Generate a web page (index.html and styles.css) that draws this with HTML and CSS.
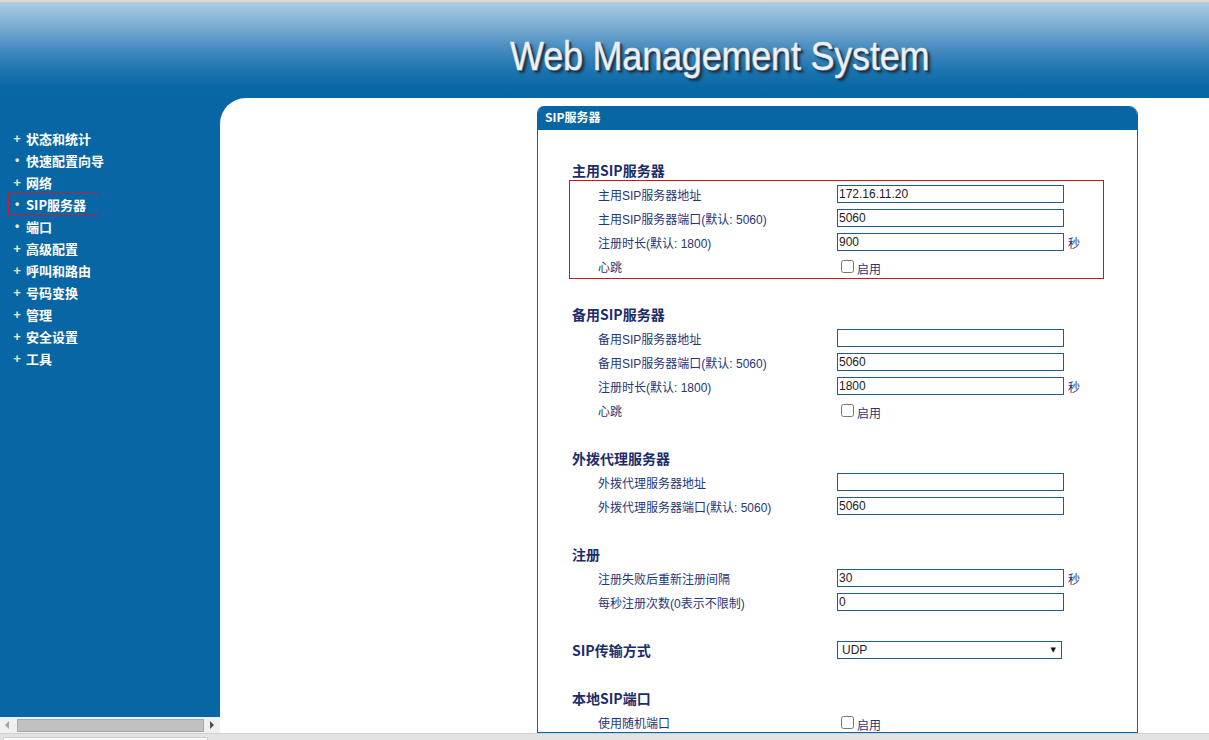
FILE: index.html
```html
<!DOCTYPE html>
<html lang="zh-CN">
<head>
<meta charset="utf-8">
<title>Web Management System</title>
<link rel="stylesheet" href="styles.css">
</head>
<body>
<div class="page">
  <div class="topline"></div>
  <header class="header">
    <h1 class="title">Web Management System</h1>
  </header>
  <div class="main">
    <aside class="side">
      <nav class="nav">
        <a class="nav-item"><span class="bullet">+</span>状态和统计</a>
        <a class="nav-item"><span class="bullet dot">•</span>快速配置向导</a>
        <a class="nav-item"><span class="bullet">+</span>网络</a>
        <a class="nav-item active"><span class="bullet dot">•</span>SIP服务器</a>
        <a class="nav-item"><span class="bullet dot">•</span>端口</a>
        <a class="nav-item"><span class="bullet">+</span>高级配置</a>
        <a class="nav-item"><span class="bullet">+</span>呼叫和路由</a>
        <a class="nav-item"><span class="bullet">+</span>号码变换</a>
        <a class="nav-item"><span class="bullet">+</span>管理</a>
        <a class="nav-item"><span class="bullet">+</span>安全设置</a>
        <a class="nav-item"><span class="bullet">+</span>工具</a>
      </nav>
      <div class="hscroll">
        <span class="arrow-left"></span>
        <span class="thumb"></span>
        <span class="arrow-right"></span>
      </div>
    </aside>
    <section class="content">
      <div class="panel">
        <div class="panel-head">SIP服务器</div>
        <div class="panel-body">
          <div class="heading">主用SIP服务器</div>
          <div class="group highlight">
            <div class="row"><span class="label">主用SIP服务器地址</span><input class="field" type="text" value="172.16.11.20"></div>
            <div class="row"><span class="label">主用SIP服务器端口(默认: 5060)</span><input class="field" type="text" value="5060"></div>
            <div class="row"><span class="label">注册时长(默认: 1800)</span><input class="field" type="text" value="900"><span class="unit">秒</span></div>
            <div class="row"><span class="label">心跳</span><label class="check"><input type="checkbox"><span>启用</span></label></div>
          </div>
          <div class="spacer"></div>

          <div class="heading">备用SIP服务器</div>
          <div class="group">
            <div class="row"><span class="label">备用SIP服务器地址</span><input class="field" type="text" value=""></div>
            <div class="row"><span class="label">备用SIP服务器端口(默认: 5060)</span><input class="field" type="text" value="5060"></div>
            <div class="row"><span class="label">注册时长(默认: 1800)</span><input class="field" type="text" value="1800"><span class="unit">秒</span></div>
            <div class="row"><span class="label">心跳</span><label class="check"><input type="checkbox"><span>启用</span></label></div>
          </div>
          <div class="spacer"></div>

          <div class="heading">外拨代理服务器</div>
          <div class="group">
            <div class="row"><span class="label">外拨代理服务器地址</span><input class="field" type="text" value=""></div>
            <div class="row"><span class="label">外拨代理服务器端口(默认: 5060)</span><input class="field" type="text" value="5060"></div>
          </div>
          <div class="spacer"></div>

          <div class="heading">注册</div>
          <div class="group">
            <div class="row"><span class="label">注册失败后重新注册间隔</span><input class="field" type="text" value="30"><span class="unit">秒</span></div>
            <div class="row"><span class="label">每秒注册次数(0表示不限制)</span><input class="field" type="text" value="0"></div>
          </div>
          <div class="spacer"></div>

          <div class="heading heading-row"><span class="heading-label">SIP传输方式</span><span class="select"><select><option>UDP</option><option>TCP</option><option>TLS</option></select></span></div>
          <div class="spacer"></div>

          <div class="heading">本地SIP端口</div>
          <div class="group">
            <div class="row"><span class="label">使用随机端口</span><label class="check"><input type="checkbox"><span>启用</span></label></div>
          </div>
        </div>
      </div>
    </section>
  </div>
  <div class="statusbar"><span class="status-box"></span></div>
</div>
</body>
</html>
```

FILE: styles.css
```css
* { box-sizing: border-box; }

html, body {
  margin: 0;
  padding: 0;
  overflow: hidden;
}

body {
  font-family: "Liberation Sans", "Noto Sans CJK SC", sans-serif;
  font-size: 12px;
  background: #ffffff;
}

.page {
  width: 1209px;
  height: 740px;
  display: flex;
  flex-direction: column;
}

.topline {
  height: 3px;
  background: #d9d9d9;
  border-bottom: 1px solid #c9c9c9;
}

.header {
  height: 95px;
  background: linear-gradient(to bottom, #a9cce3 0%, #7fb0d4 22%, #4d90c2 45%, #2277b0 68%, #0968a6 88%, #0866a4 100%);
  display: flex;
  align-items: flex-start;
  padding-left: 510px;
  padding-top: 31px;
}

.title {
  margin: 0;
  font-family: "Liberation Sans", Arial, sans-serif;
  font-weight: normal;
  font-size: 36px;
  line-height: 40px;
  color: #eef1f5;
  transform: scaleY(1.12);
  transform-origin: left top;
  text-shadow: 1px 1px 0 #4a5b70, 2px 2px 1px #1b2c44, 3px 3px 3px rgba(0, 0, 0, 0.5);
  letter-spacing: -0.2px;
  -webkit-text-stroke: 0.4px #dfe5ec;
}

.main {
  flex: 1;
  display: flex;
  background: #0866a4;
  min-height: 0;
}

.side {
  width: 220px;
  display: flex;
  flex-direction: column;
}

.nav {
  flex: 1;
  display: flex;
  flex-direction: column;
  align-items: flex-start;
  padding-top: 29px;
}

.nav-item {
  display: flex;
  align-items: center;
  height: 22px;
  margin-left: 8px;
  padding-right: 11px;
  border-width: 1px;
  border-style: solid;
  border-color: transparent;
  color: #ffffff;
  font-family: "Noto Sans CJK SC", "Liberation Sans", sans-serif;
  font-weight: bold;
  font-size: 13px;
  text-decoration: none;
}

.nav-item.active {
  border-color: #b8203e;
}

.bullet {
  width: 17px;
  text-align: center;
  color: #e4efbe;
  font-family: "Liberation Sans", sans-serif;
  font-size: 13px;
  font-weight: bold;
  padding-right: 1px;
}

.bullet.dot {
  font-size: 12px;
}

.hscroll {
  height: 16px;
  background: #f0f0f0;
  display: flex;
  align-items: center;
  padding: 0 6px 0 5px;
}

.arrow-left {
  width: 0;
  height: 0;
  border-top: 4px solid transparent;
  border-bottom: 4px solid transparent;
  border-right: 4px solid #a3a3a3;
}

.thumb {
  flex: 1;
  height: 13px;
  margin: 0 6px 0 8px;
  background: #c1c1c1;
  border: 1px solid #a9a9a9;
}

.arrow-right {
  width: 0;
  height: 0;
  border-top: 4px solid transparent;
  border-bottom: 4px solid transparent;
  border-left: 4px solid #505050;
}

.content {
  flex: 1;
  background: #ffffff;
  border-top-left-radius: 26px;
  overflow: hidden;
  padding: 8px 0 0 317px;
}

.panel {
  width: 601px;
  height: 100%;
  border: 1px solid #0866a4;
  border-top: none;
  border-radius: 7px 9px 0 0;
  overflow: hidden;
}

.panel-head {
  height: 24px;
  background: #0866a4;
  color: #ffffff;
  font-family: "Noto Sans CJK SC", "Liberation Sans", sans-serif;
  font-weight: bold;
  font-size: 12px;
  line-height: 22px;
  padding-left: 7px;
}

.panel-body {
  padding: 28px 0 0 31px;
}

.heading {
  height: 24px;
  display: flex;
  align-items: center;
  padding-left: 3px;
  color: #1c2d6b;
  font-family: "Noto Sans CJK SC", "Liberation Sans", sans-serif;
  font-weight: bold;
  font-size: 14px;
}

.heading-label {
  width: 265px;
}

.group {
  width: 535px;
  border-left: 1px solid transparent;
  border-right: 1px solid transparent;
}

.group.highlight {
  border-width: 1px;
  border-style: solid;
  border-color: #d0141f;
  margin-top: -2px;
  padding-top: 1px;
  margin-bottom: -1px;
}

.row {
  height: 24px;
  display: flex;
  align-items: center;
  padding-left: 28px;
}

.label {
  width: 239px;
  color: #26367a;
  font-family: "Liberation Sans", "Noto Sans CJK SC", sans-serif;
  font-size: 12px;
}

.field {
  width: 227px;
  height: 18px;
  border: 1px solid #235d86;
  padding: 0 1px;
  margin: 0;
  font-family: "Liberation Sans", sans-serif;
  font-size: 12px;
  color: #222222;
  background: #ffffff;
  outline: none;
}

.unit {
  margin-left: 4px;
  color: #26367a;
  font-family: "Noto Sans CJK SC", sans-serif;
  font-size: 12px;
}

.check {
  display: flex;
  align-items: center;
  margin-left: 4px;
  color: #26367a;
  font-family: "Noto Sans CJK SC", sans-serif;
  font-size: 12px;
}

.check input {
  width: 13px;
  height: 13px;
  margin: 0 3px 0 0;
}

.check span {
  position: relative;
  top: 2px;
}

.spacer {
  height: 24px;
}

.select {
  position: relative;
  display: block;
  width: 225px;
  height: 18px;
}

.select select {
  display: block;
  appearance: none;
  -webkit-appearance: none;
  width: 225px;
  height: 18px;
  border: 1px solid #235d86;
  border-radius: 0;
  background: #ffffff;
  padding: 0 4px;
  margin: 0;
  font-family: "Liberation Sans", sans-serif;
  font-size: 12px;
  font-weight: normal;
  color: #222222;
  outline: none;
}

.select::after {
  content: "▼";
  position: absolute;
  right: 6px;
  top: 4px;
  font-family: "DejaVu Sans", sans-serif;
  font-size: 7px;
  line-height: 10px;
  color: #111111;
  pointer-events: none;
}

.statusbar {
  height: 7px;
  background: #e3e3e3;
  border-top: 1px solid #d0d0d0;
  padding: 3px 0 0 3px;
}

.status-box {
  display: block;
  width: 205px;
  height: 4px;
  background: #fafafa;
  border: 1px solid #cfcfcf;
  border-bottom: none;
}
```
